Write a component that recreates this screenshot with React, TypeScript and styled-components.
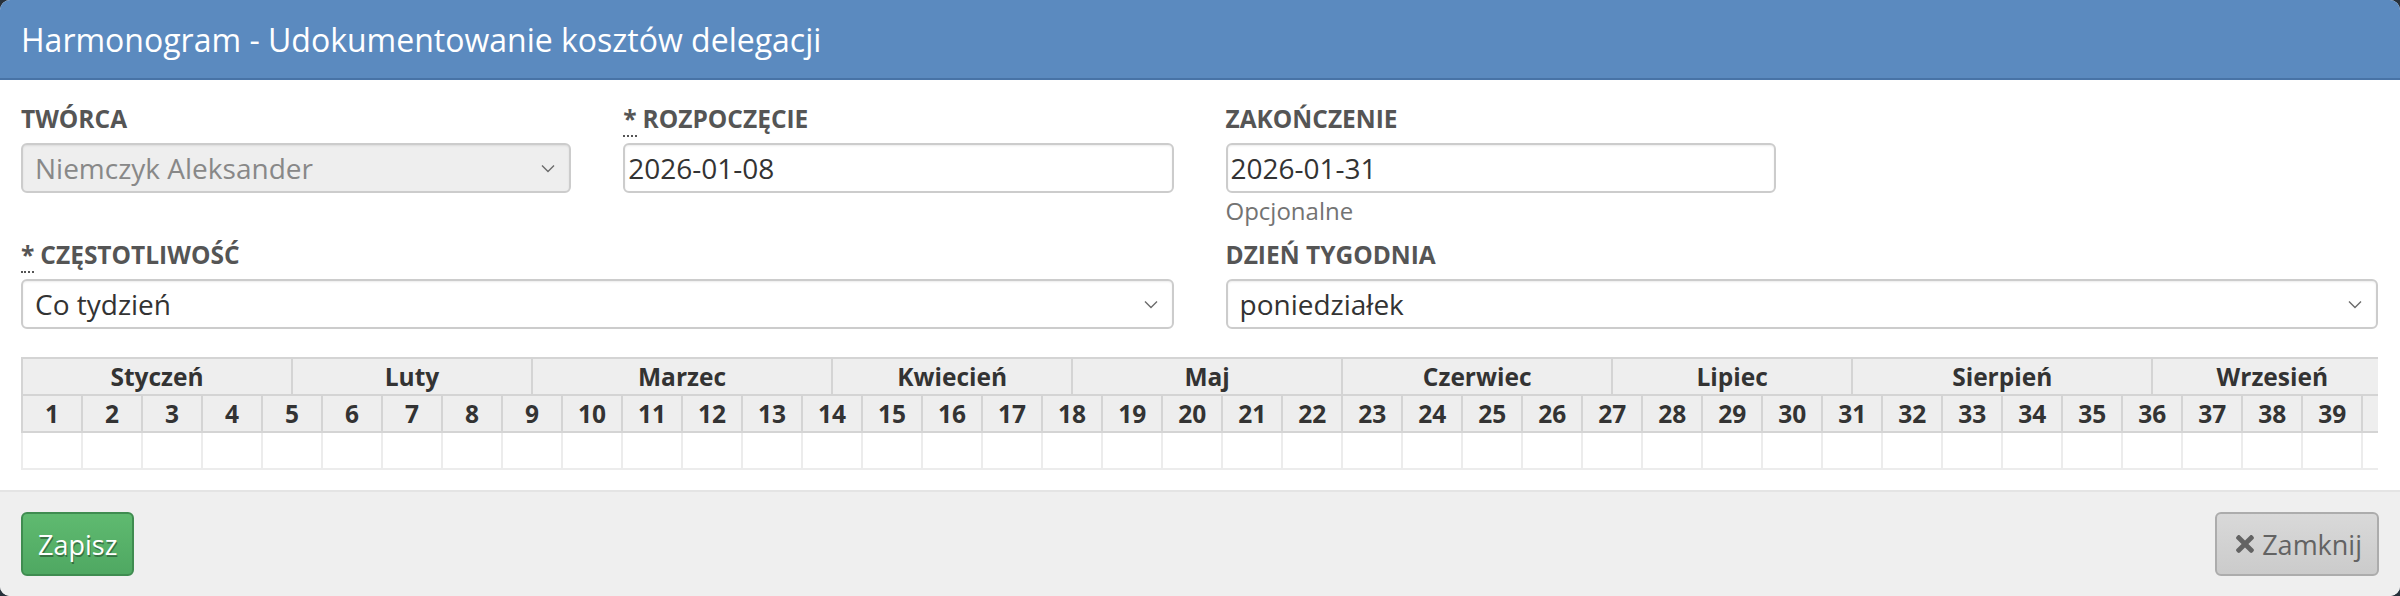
import React from 'react'
import styled, { createGlobalStyle } from 'styled-components'
import { FaTimes } from 'react-icons/fa'

const GlobalStyle = createGlobalStyle`
  html, body {
    margin: 0;
    padding: 0;
    background: #27313b;
  }
  body {
    font-family: 'Open Sans', 'Liberation Sans', sans-serif;
    color: #333;
  }
  * {
    box-sizing: border-box;
  }
`

const Modal = styled.div`
  width: 2400px;
  height: 596px;
  background: #fff;
  border-radius: 10px;
  overflow: hidden;
  display: flex;
  flex-direction: column;
`

const Header = styled.div`
  height: 80px;
  background: #5b8abf;
  border-bottom: 2px solid #4873a6;
  padding: 0 21px;
  display: flex;
  align-items: center;
`

const Title = styled.h4`
  margin: 0 0 0 0;
  padding-top: 2px;
  font-size: 32px;
  font-weight: 400;
  line-height: 1.1;
  color: #fff;
`

const Body = styled.div`
  flex: 1;
  padding: 21px 22px 0 21px;
  min-width: 0;
`

const FormRow = styled.div<{ gap: number }>`
  display: grid;
  grid-template-columns: repeat(4, 1fr);
  column-gap: 52px;
  margin-bottom: ${(p) => p.gap}px;
`

const Group = styled.div<{ span: number }>`
  grid-column: span ${(p) => p.span};
  min-width: 0;
`

const Label = styled.label`
  display: block;
  font-size: 24.5px;
  font-weight: 700;
  line-height: 35px;
  color: #555;
  text-transform: uppercase;
  margin-bottom: 7px;
`

const Required = styled.abbr`
  text-decoration: none;
  border-bottom: 2px dotted #555;
  cursor: help;
  margin-right: 6px;
`

const Field = styled.div<{ disabled?: boolean; kind: 'select' | 'date' }>`
  height: 50px;
  border: 2px solid #ccc;
  border-radius: 6px;
  background: ${(p) => (p.disabled ? '#eee' : '#fff')};
  color: ${(p) => (p.disabled ? '#888' : '#333')};
  box-shadow: inset 0 1px 2px rgba(0, 0, 0, 0.075);
  padding: ${(p) => (p.kind === 'select' ? '0 14px 0 12px' : '0 10px 0 3px')};
  display: flex;
  align-items: center;
  justify-content: space-between;
  font-size: 28px;
`

const FieldText = styled.span`
  white-space: nowrap;
`

const Help = styled.div`
  margin-top: 4px;
  font-size: 24px;
  line-height: 28px;
  color: #737373;
`

const TableWrap = styled.div`
  overflow: hidden;
`

const Grid = styled.table`
  border-collapse: collapse;
  table-layout: fixed;
  width: 3180px;
`

const HeadCell = styled.th`
  height: 37px;
  padding: 0;
  background: #eee;
  border: 2px solid #d4d4d4;
  font-size: 24.5px;
  font-weight: 700;
  color: #333;
  text-align: center;
  line-height: 33px;
`

const DayCell = styled.td`
  height: 37px;
  padding: 0;
  border: 2px solid #ececec;
`

const Footer = styled.div`
  height: 106px;
  background: #efefef;
  border-top: 2px solid #e4e4e4;
  padding: 20px 21px 0 21px;
  display: flex;
  justify-content: space-between;
  align-items: flex-start;
`

const Button = styled.button<{ variant: 'success' | 'default' }>`
  height: 64px;
  padding: 0 15px;
  border-radius: 6px;
  font-family: inherit;
  font-size: 27px;
  line-height: 1;
  display: flex;
  align-items: center;
  gap: 4px;
  cursor: pointer;
  border: 2px solid ${(p) => (p.variant === 'success' ? '#3f8c50' : '#acacac')};
  background: ${(p) =>
    p.variant === 'success'
      ? 'linear-gradient(#5fba70, #4fa862)'
      : 'linear-gradient(#d9d9d9, #cbcbcb)'};
  color: ${(p) => (p.variant === 'success' ? '#fff' : '#636363')};
  text-shadow: ${(p) =>
    p.variant === 'success' ? '1px 2px 0 rgba(0, 0, 0, 0.35)' : 'none'};
`

const Chevron = () => (
  <svg width="14" height="9" viewBox="0 0 14 9" fill="none">
    <path d="M1 1.5 L7 7.5 L13 1.5" stroke="#6b6b6b" strokeWidth="1.4" />
  </svg>
)

const months: [string, number][] = [
  ['Styczeń', 4.5],
  ['Luty', 4],
  ['Marzec', 5],
  ['Kwiecień', 4],
  ['Maj', 4.5],
  ['Czerwiec', 4.5],
  ['Lipiec', 4],
  ['Sierpień', 5],
  ['Wrzesień', 4],
  ['Październik', 4.5],
  ['Listopad', 4],
  ['Grudzień', 5],
]

const weeks = Array.from({ length: 53 }, (_, i) => i + 1)

export default function App() {
  return (
    <>
      <GlobalStyle />
      <Modal>
        <Header>
          <Title>Harmonogram - Udokumentowanie kosztów delegacji</Title>
        </Header>
        <Body>
          <FormRow gap={12}>
            <Group span={1}>
              <Label>Twórca</Label>
              <Field kind="select" disabled>
                <FieldText>Niemczyk Aleksander</FieldText>
                <Chevron />
              </Field>
            </Group>
            <Group span={1}>
              <Label>
                <Required title="Wymagane">*</Required>Rozpoczęcie
              </Label>
              <Field kind="date">
                <FieldText>2026-01-08</FieldText>
              </Field>
            </Group>
            <Group span={1}>
              <Label>Zakończenie</Label>
              <Field kind="date">
                <FieldText>2026-01-31</FieldText>
              </Field>
              <Help>Opcjonalne</Help>
            </Group>
          </FormRow>
          <FormRow gap={28}>
            <Group span={2}>
              <Label>
                <Required title="Wymagane">*</Required>Częstotliwość
              </Label>
              <Field kind="select">
                <FieldText>Co tydzień</FieldText>
                <Chevron />
              </Field>
            </Group>
            <Group span={2}>
              <Label>Dzień tygodnia</Label>
              <Field kind="select">
                <FieldText>poniedziałek</FieldText>
                <Chevron />
              </Field>
            </Group>
          </FormRow>
          <TableWrap>
            <Grid>
              <colgroup>
                {Array.from({ length: 106 }, (_, i) => (
                  <col key={i} style={{ width: 30 }} />
                ))}
              </colgroup>
              <thead>
                <tr>
                  {months.map(([name, span]) => (
                    <HeadCell key={name} colSpan={span * 2}>
                      {name}
                    </HeadCell>
                  ))}
                </tr>
                <tr>
                  {weeks.map((w) => (
                    <HeadCell key={w} colSpan={2}>
                      {w}
                    </HeadCell>
                  ))}
                </tr>
              </thead>
              <tbody>
                <tr>
                  {weeks.map((w) => (
                    <DayCell key={w} colSpan={2} />
                  ))}
                </tr>
              </tbody>
            </Grid>
          </TableWrap>
        </Body>
        <Footer>
          <Button variant="success">Zapisz</Button>
          <Button variant="default">
            <FaTimes size={26} />
            Zamknij
          </Button>
        </Footer>
      </Modal>
    </>
  )
}
